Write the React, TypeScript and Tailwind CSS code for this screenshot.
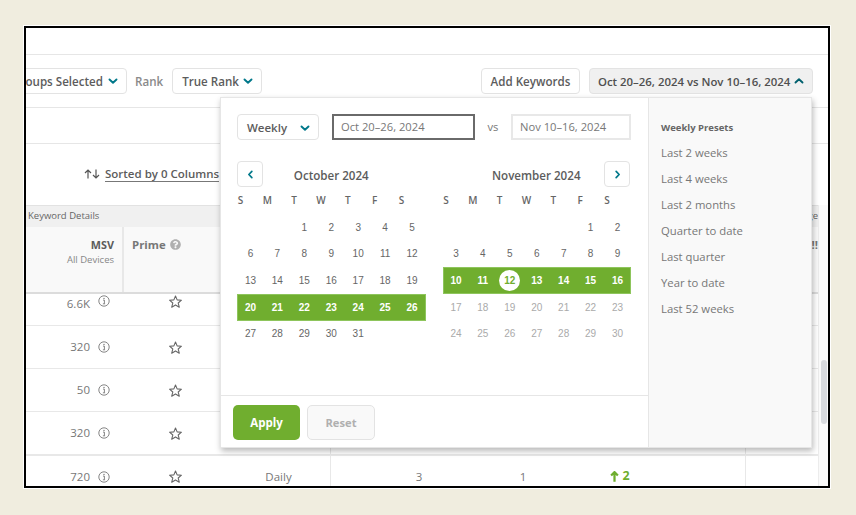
import React from "react";
import { FaQuestionCircle } from "react-icons/fa";

const sans = "font-['Open_Sans',sans-serif]";

function Chevron({ dir = "down", color = "#00788a", size = 10 }: { dir?: "down" | "up" | "left" | "right"; color?: string; size?: number }) {
  const d = {
    down: "M1.5 3.5 L5 6.8 L8.5 3.5",
    up: "M1.5 6.5 L5 3.2 L8.5 6.5",
    left: "M6.5 1.5 L3.2 5 L6.5 8.5",
    right: "M3.5 1.5 L6.8 5 L3.5 8.5",
  }[dir];
  return (
    <svg width={size} height={size} viewBox="0 0 10 10" fill="none" className="shrink-0">
      <path d={d} stroke={color} strokeWidth="1.9" strokeLinecap="round" strokeLinejoin="round" />
    </svg>
  );
}

function InfoIcon() {
  return (
    <svg width="12" height="12" viewBox="0 0 12 12" fill="none" className="shrink-0">
      <circle cx="6" cy="6" r="5.2" stroke="#777" strokeWidth="0.9" />
      <circle cx="6" cy="3.4" r="0.7" fill="#777" />
      <path d="M5 5.1 H6.4 V8.6 M4.9 8.8 H7.1" stroke="#777" strokeWidth="0.9" />
    </svg>
  );
}

function StarIcon() {
  return (
    <svg width="13" height="13" viewBox="0 0 24 24" fill="none" className="shrink-0">
      <path d="M12 2 L15 9 L23 9.6 L17 14.8 L19 22.5 L12 18.3 L5 22.5 L7 14.8 L1 9.6 L9 9 Z" stroke="#666" strokeWidth="2" strokeLinejoin="round" />
    </svg>
  );
}

function VArrow({ up, color = "#555", w = 2, width = 8 }: { up: boolean; color?: string; w?: number; width?: number }) {
  return (
    <svg width={width} height={width * 1.25} viewBox="0 0 8 10" fill="none" className="shrink-0">
      <path d={up ? "M4 9.5 V1 M1 4 L4 1 L7 4" : "M4 0.5 V9 M1 6 L4 9 L7 6"} stroke={color} strokeWidth={w} />
    </svg>
  );
}

const rows = [
  { h: "h-[32px]", msv: "6.6K", top: "items-start pt-[1px]", thick: false },
  { h: "h-[43px]", msv: "320", top: "items-center", thick: false },
  { h: "h-[43px]", msv: "50", top: "items-center", thick: false },
  { h: "h-[44px]", msv: "320", top: "items-center", thick: true },
  { h: "h-[42px]", msv: "720", top: "items-center", thick: false },
];

function Row({ h, msv, top, thick, last }: { h: string; msv: string; top: string; thick: boolean; last: boolean }) {
  return (
    <div className={`${h} flex shrink-0 text-[11.5px] text-[#777] ${thick ? "border-b-2" : "border-b"} border-[#e8e8e8]`}>
      <div className={`w-[98px] flex ${top} justify-end gap-[8px] pr-[14px]`}>
        <span>{msv}</span>
        <InfoIcon />
      </div>
      <div className={`w-[103px] flex ${top} justify-center`}>
        <StarIcon />
      </div>
      <div className={`w-[103px] flex ${top} justify-center`}>{last ? "Daily" : ""}</div>
      <div className={`w-[416px] flex ${top} border-l border-r border-[#e8e8e8]`}>
        {last && (
          <>
            <span className="w-[36px]" />
            <span className="w-[104px] text-center">3</span>
            <span className="w-[104px] text-center">1</span>
            <span className="w-[90px] flex justify-center items-center gap-[3px] text-[12.5px] font-bold text-[#6fae2e]">
              <VArrow up color="#6fae2e" width={9} />2
            </span>
          </>
        )}
      </div>
      <div className="w-[72px]" />
    </div>
  );
}

function Week({ days, selected, dim, today }: { days: (number | null)[]; selected?: boolean; dim?: boolean; today?: number }) {
  return (
    <div
      className={`grid grid-cols-7 h-[26.67px] items-center text-center font-['Liberation_Sans',sans-serif] text-[10px] ${
        selected ? "bg-[#70ae2f] shadow-[inset_0_0_0_1px_#8ec55c] text-white font-bold" : dim ? "text-[#aaa]" : "text-[#666]"
      }`}
    >
      {days.map((d, i) => (
        <span key={i} className="flex justify-center items-center">
          {d === today && d !== null ? (
            <span className="w-[21px] h-[21px] rounded-full bg-white text-[#70ae2f] flex items-center justify-center">{d}</span>
          ) : (
            d
          )}
        </span>
      ))}
    </div>
  );
}

function WeekdayRow() {
  return (
    <div className="grid grid-cols-7 w-[188px] h-[27px] items-center text-center -ml-[10px] text-[10px] font-semibold text-[#666]">
      {["S", "M", "T", "W", "T", "F", "S"].map((d, i) => (
        <span key={i}>{d}</span>
      ))}
    </div>
  );
}

const NavBtn = ({ dir }: { dir: "left" | "right" }) => (
  <button className="w-[26px] h-[26px] rounded-[4px] border border-[#e3e3e3] bg-white flex items-center justify-center">
    <Chevron dir={dir} size={9} />
  </button>
);

function Popover() {
  return (
    <div className="absolute left-[194px] top-[69px] w-[592px] h-[351px] bg-white border border-[#e6e6e6] shadow-[1px_3px_6px_rgba(0,0,0,0.28)] flex">
      <div className="w-[428px] flex flex-col border-r border-[#e6e6e6]">
        <div className="flex-1 pl-[16px] pr-[16px] pt-[16px]">
          <div className="flex items-center h-[26px]">
            <button className="w-[82px] h-[26px] rounded-[4px] border border-[#e3e3e3] flex items-center justify-between pl-[9px] pr-[8px] pt-[1px] text-[11.5px] font-semibold text-[#5c5c5c]">
              Weekly
              <Chevron />
            </button>
            <div className="ml-[13px] w-[143px] h-[26px] border-2 border-[#6a6a6a] pl-[7px] pt-[1px] flex items-center text-[11.2px] text-[#777]">Oct 20–26, 2024</div>
            <span className="w-[36px] text-center pt-[1px] text-[11.2px] text-[#777]">vs</span>
            <div className="w-[120px] h-[26px] border-2 border-[#e8e8e8] pl-[7px] pt-[1px] flex items-center text-[11.2px] text-[#777]">Nov 10–16, 2024</div>
          </div>
          <div className="flex gap-[17px] mt-[21px]">
            <div className="w-[188.5px]">
              <div className="flex items-center h-[26px]">
                <NavBtn dir="left" />
                <span className="flex-1 text-center pt-[3px] text-[11.6px] font-semibold text-[#5c5c5c]">October 2024</span>
                <span className="w-[26px]" />
              </div>
              <WeekdayRow />
              <Week days={[null, null, 1, 2, 3, 4, 5]} />
              <Week days={[6, 7, 8, 9, 10, 11, 12]} />
              <Week days={[13, 14, 15, 16, 17, 18, 19]} />
              <Week days={[20, 21, 22, 23, 24, 25, 26]} selected />
              <Week days={[27, 28, 29, 30, 31, null, null]} />
            </div>
            <div className="w-[188.5px]">
              <div className="flex items-center h-[26px] pr-[1px]">
                <span className="w-[26px]" />
                <span className="flex-1 text-center pt-[3px] text-[11.6px] font-semibold text-[#5c5c5c]">November 2024</span>
                <NavBtn dir="right" />
              </div>
              <WeekdayRow />
              <Week days={[null, null, null, null, null, 1, 2]} />
              <Week days={[3, 4, 5, 6, 7, 8, 9]} />
              <Week days={[10, 11, 12, 13, 14, 15, 16]} selected today={12} />
              <Week days={[17, 18, 19, 20, 21, 22, 23]} dim />
              <Week days={[24, 25, 26, 27, 28, 29, 30]} dim />
            </div>
          </div>
        </div>
        <div className="h-[52px] shrink-0 border-t border-[#e6e6e6] flex items-center gap-[7px] pl-[12px] pt-[2px]">
          <button className="w-[67px] h-[35px] rounded-[5px] bg-[#70ae2f] pt-[1px] text-white text-[11.5px] font-bold">Apply</button>
          <button className="w-[68px] h-[35px] rounded-[5px] bg-[#f9f9f9] border border-[#e3e3e3] pt-[1px] text-[#b0b0b0] text-[11.2px] font-bold">Reset</button>
        </div>
      </div>
      <div className="flex-1 bg-[#f9f9f9] pl-[12px] pt-[23px]">
        <div className="text-[9.5px] font-bold text-[#666] h-[14px] leading-[14px]">Weekly Presets</div>
        <div className="flex flex-col mt-[5px] text-[11.3px] text-[#777]">
          {["Last 2 weeks", "Last 4 weeks", "Last 2 months", "Quarter to date", "Last quarter", "Year to date", "Last 52 weeks"].map((p) => (
            <div key={p} className="h-[26px] flex items-center">{p}</div>
          ))}
        </div>
      </div>
    </div>
  );
}

export default function App() {
  return (
    <div className={`w-[856px] h-[515px] bg-[#f0eddf] pl-[24px] pt-[26px] overflow-hidden ${sans}`}>
      <div className="relative w-[806px] h-[462px] border-2 border-black bg-white overflow-hidden shadow-[0_0_0_1px_#fff] flex flex-col">
        <div className="h-[27px] shrink-0 border-b border-[#e6e6e6]" />
        <div className="h-[53px] shrink-0 border-b border-[#e6e6e6] flex items-center pr-[15px]">
          <button className="-ml-[50px] w-[151px] h-[26px] rounded-[4px] border border-[#e3e3e3] flex items-center justify-end gap-[5px] pr-[8px] text-[11.6px] font-semibold text-[#5c5c5c] whitespace-nowrap">
            <span className="pt-[1px]">Keyword Groups Selected</span>
            <Chevron />
          </button>
          <span className="ml-[8px] pt-[1px] text-[11.6px] font-semibold text-[#8a8a8a]">Rank</span>
          <button className="ml-[9px] w-[90px] h-[26px] rounded-[4px] border border-[#e3e3e3] flex items-center justify-between pl-[9px] pr-[8px] text-[11.6px] font-semibold text-[#5c5c5c]">
            <span className="pt-[1px]">True Rank</span>
            <Chevron />
          </button>
          <button className="ml-auto w-[99px] h-[26px] rounded-[4px] border border-[#e3e3e3] pt-[1px] text-[11.6px] font-semibold text-[#5c5c5c]">Add Keywords</button>
          <button className="ml-[9px] w-[224px] h-[26px] rounded-[4px] border border-[#e3e3e3] bg-[#f0f0f0] flex items-center justify-between pl-[8px] pr-[8px] text-[11.4px] font-semibold text-[#4f4f4f] whitespace-nowrap">
            <span className="pt-[1px]">Oct 20–26, 2024 vs Nov 10–16, 2024</span>
            <Chevron dir="up" color="#00606e" />
          </button>
        </div>
        <div className="h-[36px] shrink-0 border-b border-[#e6e6e6]" />
        <div className="h-[61px] shrink-0 flex items-center pl-[58px] pb-[1px]">
          <span className="flex items-center mr-[5px]">
            <VArrow up w={1.2} />
            <VArrow up={false} w={1.2} />
          </span>
          <span className="text-[11.5px] font-semibold text-[#5c5c5c] border-b border-[#777] leading-[15px] whitespace-nowrap">Sorted by 0 Columns</span>
        </div>
        <div className="h-[22px] shrink-0 bg-[#f0f0f0] border-t border-[#e2e2e2] flex items-center pl-[2px] pr-[10px] pb-[1px] text-[9.5px] text-[#666]">
          <span>Keyword Details</span>
          <span className="ml-auto">Page</span>
        </div>
        <div className="h-[67px] shrink-0 bg-[#f9f9f9] border-b-2 border-[#dcdcdc] flex">
          <div className="w-[98px] border-r-2 border-[#e8e8e8] pr-[8px] pt-[10px] text-right">
            <div className="text-[10.8px] font-bold text-[#5c5c5c] leading-[16px]">MSV</div>
            <div className="text-[9.5px] text-[#888] leading-[14px] whitespace-nowrap">All Devices</div>
          </div>
          <div className="pl-[8px] pt-[10px] flex items-start gap-[4px] text-[11.4px] font-bold text-[#777] leading-[16px]">
            Prime
            <FaQuestionCircle className="mt-[2px] text-[#b0b0b0]" size={11} />
          </div>
          <div className="ml-auto pr-[10px] pt-[10px] text-[11.4px] font-bold text-[#777] leading-[16px]">!!</div>
        </div>
        <div className="flex flex-col">
          {rows.map((r, i) => (
            <Row key={i} {...r} last={i === rows.length - 1} />
          ))}
        </div>
        <div className="absolute right-0 bottom-0 w-[10px] top-[177px] bg-[#fafafa] border-l border-[#ececec]" />
        <div className="absolute right-[1px] top-[332px] w-[6px] h-[64px] rounded-full bg-[#d8dade]" />
        <Popover />
      </div>
    </div>
  );
}
